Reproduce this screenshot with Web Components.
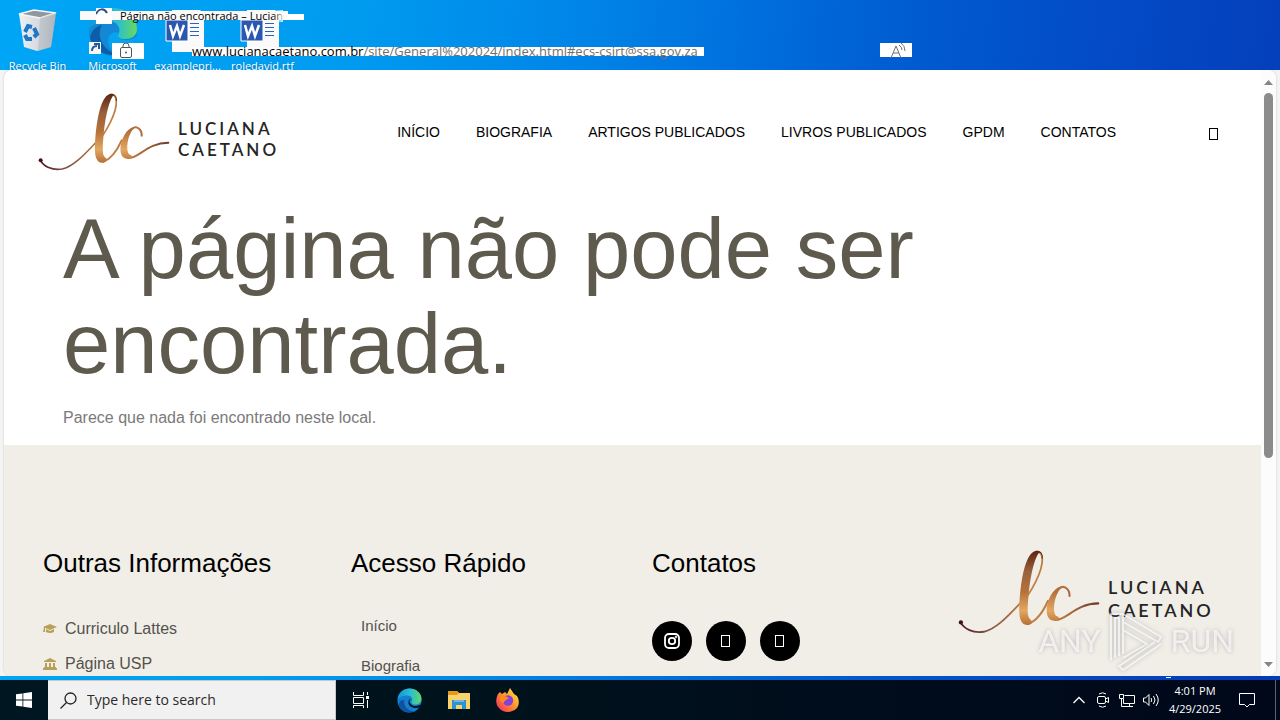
<!DOCTYPE html>
<html lang="pt-BR">
<head>
<meta charset="utf-8">
<title>Página não encontrada – Luciana Caetano</title>
<style>
  html, body { height: 100%; }
  body {
    margin: 0; overflow: hidden;
    font-family: "Liberation Sans", Arial, sans-serif;
    --ui: "Open Sans", "Noto Sans", sans-serif;
    background: linear-gradient(97deg, #00a6f5 0%, #009cf0 25%, #0086e8 42%, #006fdd 55%, #0058cf 69%, #0448c4 84%, #043ab6 100%);
  }
</style>
</head>
<body>
<win-screen></win-screen>

<script>
const define = (name, html) => customElements.define(name, class extends HTMLElement {
  constructor() {
    super();
    const t = document.createElement('template');
    t.innerHTML = html;
    this.attachShadow({ mode: 'open' }).append(t.content.cloneNode(true));
  }
});

/* Desktop icons */
define('desktop-icon', `
<style>
  :host { display: flex; flex-direction: column; align-items: center; width: 75px; flex: none; padding-top: 8px; box-sizing: border-box; }
  .art { height: 51px; display: flex; }
  .label { font: 11px/14px var(--ui); color: #fff; white-space: nowrap; text-shadow: 0 1px 2px #0469a8; }
</style>
<div class="art"><slot name="art"></slot></div>
<div class="label"><slot></slot></div>`);

define('word-art', `
<style>:host { display: block; } svg { display: block; }</style>
<svg width="48" height="50" viewBox="0 0 48 50" aria-hidden="true">
  <path d="M8 2h28l4 4v38H8z" fill="#fafafa"/>
  <path d="M26 15.500h9M26 19.500h9M26 23.500h9M26 27.500h9" stroke="#2b62c0"/>
  <path d="M2 12h22v21H2z" fill="#2a58b0" stroke="#fff"/>
  <path d="M6 17l3 11 4-10 3 10 4-11" fill="none" stroke="#fff" stroke-width="2.500"/>
</svg>`);

define('desktop-area', `
<style>
  :host { display: block; position: relative; height: 70px; overflow: hidden; flex: none; }
  .icons { display: flex; }
  svg { display: block; }
  .float { position: absolute; }
  .patch { position: absolute; background: #fff; }
  .tab { left: 120px; top: 8px; font: 11px/16px var(--ui); color: #000; white-space: nowrap; }
  .tab::after { content: ""; position: absolute; right: 0; top: 2px; width: 10px; height: 12px; background: linear-gradient(90deg, transparent, #fffc); }
  .strip { left: 80px; top: 11px; width: 208px; height: 9px; background: #fafafa; }
  .strip-end { left: 284px; top: 14px; width: 20px; height: 6px; }
  .spin { left: 96px; top: 8px; width: 16px; height: 16px; }
  .lock { left: 112px; top: 43px; width: 32px; height: 16px; }
  .bar { left: 192px; top: 47px; width: 512px; height: 9px; }
  .url { left: 192px; top: 43px; font: 13px/16px var(--ui); color: #6f6f6f; white-space: nowrap; }
  .url b { font-weight: 400; color: #000; }
  .read { left: 880px; top: 43px; width: 32px; height: 14px; }
</style>
<div class="icons">
  <desktop-icon>
    <svg slot="art" width="44" height="46" viewBox="0 0 44 46" aria-hidden="true">
      <defs><linearGradient id="bin" x2="1"><stop stop-color="#eef1f4"/><stop offset=".6" stop-color="#d2d7dc"/><stop offset="1" stop-color="#a3abb4"/></linearGradient></defs>
      <path d="M3 6l15-4 22 3-5 34-14 4-13-4z" fill="url(#bin)"/>
      <path d="M3 6l15-4 22 3-16 5z" fill="#8f979f" stroke="#f5f7f8" stroke-width="1.500"/>
      <path d="M24 10l-2 33 13-4 5-34z" fill="#b4bac2" opacity=".6"/>
      <g fill="none" stroke="#1f77c9" stroke-width="4"><path d="M9 24l3-6 4 1"/><path d="M18 20l3 6-3 3"/><path d="M16 31h-5l-2-4"/></g>
    </svg>Recycle Bin
  </desktop-icon>
  <desktop-icon>
    <svg slot="art" width="50" height="48" viewBox="0 0 50 48" aria-hidden="true">
      <defs><linearGradient id="eg" x2="1"><stop stop-color="#1497dd"/><stop offset=".6" stop-color="#2bc0d0"/><stop offset="1" stop-color="#68d95a"/></linearGradient></defs>
      <circle cx="25" cy="24" r="24" fill="#1389d6"/>
      <path d="M1 22C3 7 14 0 25 0c14 0 24 10 24 21 0 7-6 10-12 10-5 0-9-2-6-6 2-5-2-12-10-12C11 13 3 17 1 22z" fill="url(#eg)"/>
      <path d="M14 17C8 27 14 44 31 46 22 50 5 43 2 30c1-7 6-12 12-13z" fill="#0d5da8"/>
      <path d="M31 25c-3 4 1 7 7 7 6 0 9-2 11-4-3 10-12 17-18 17-7-1-12-7-11-14 1-4 6-9 11-6z" fill="#06a3f0"/>
      <path d="M1 34h12v12H1z" fill="#f4f6f8"/><path d="M4 43c0-4 2-5 5-5M6 36h5v5" fill="none" stroke="#205a9b" stroke-width="2"/>
    </svg>Microsoft
  </desktop-icon>
  <desktop-icon><word-art slot="art"></word-art>examplepri...</desktop-icon>
  <desktop-icon><word-art slot="art"></word-art>roledavid.rtf</desktop-icon>
</div>
<div class="patch strip"></div>
<div class="patch strip-end"></div>
<div class="patch spin"><svg width="16" height="16" aria-hidden="true"><path d="M0 6c3-6 8-6 11-1" fill="none" stroke="#24508c" stroke-width="2"/></svg></div>
<div class="float tab">Página não encontrada – Lucian</div>
<div class="patch lock"><svg width="32" height="16" aria-hidden="true"><g fill="none" stroke="#555"><rect x="8.500" y="4.500" width="11" height="10" rx="1.500"/><path d="M11 4V3a3 3 0 0 1 6 0v1"/></g><circle cx="14" cy="9.500" r="1" fill="#555"/></svg></div>
<div class="patch bar"></div>
<div class="float url"><b>www.lucianacaetano.com.br</b>/site/General%202024/index.html#ecs-csirt@ssa.gov.za</div>
<div class="patch read"><svg width="32" height="16" overflow="visible" aria-hidden="true"><path d="M11 15L16 3l5 12M13 10h6M19 2q3 2 3 5M21 0q4 3 4 8" fill="none" stroke="#6c7078"/></svg></div>`);

/* Brand */
define('brand-logo', `
<style>
  :host { display: flex; align-items: center; flex: none; }
  svg { display: block; width: var(--mark, 132px); height: auto; }
  .name { color: #262424; font: 600 var(--name, 17px)/var(--name-line, 21px) Lato, sans-serif; letter-spacing: 3px; padding-top: 14px; }
  .name span { display: block; }
  a { display: flex; align-items: center; gap: 8px; text-decoration: none; }
</style>
<a href="#">
<svg viewBox="54 38 396 237" role="img" aria-label="LC">
  <defs>
    <linearGradient id="g" gradientUnits="userSpaceOnUse" x1="0" y1="40" x2="0" y2="272"><stop stop-color="#5d2413"/><stop offset=".25" stop-color="#99613b"/><stop offset=".5" stop-color="#b5733b"/><stop offset=".72" stop-color="#e3a760"/><stop offset=".88" stop-color="#b87438"/><stop offset="1" stop-color="#74432c"/></linearGradient>
    <linearGradient id="h" gradientUnits="userSpaceOnUse" x1="55" y1="0" x2="447" y2="0"><stop stop-color="#4b1019"/><stop offset=".2" stop-color="#805044"/><stop offset=".5" stop-color="#c28246"/><stop offset=".75" stop-color="#b87440"/><stop offset="1" stop-color="#6d3928"/></linearGradient>
  </defs>
  <g fill="none" stroke="url(#h)" stroke-linecap="round">
    <path d="M61 240C71 258 96 271 126 266C162 259 202 213 228 186" stroke-width="5"/>
    <path d="M228 190C258 158 291 96 289 62C288 48 281 42 272 43" stroke-width="5"/>
    <path d="M250 244C273 236 291 211 305 180" stroke-width="6"/>
    <path d="M324 233C356 236 381 187 445 187" stroke-width="6"/>
    <path d="M337 145C350 134 366 148 365 166" stroke-width="6"/>
  </g>
  <circle cx="62" cy="240" r="6" fill="#45101a"/>
  <g fill="url(#g)">
    <path d="M291 62C291 42 280 38 269 41C239 51 228 133 225 193C223 226 229 250 250 247C262 245 263 237 255 231C246 223 248 198 250 172C254 122 264 70 278 48C283 42 289 48 287 62z"/>
    <path d="M352 140C332 133 307 161 302 196C298 223 310 239 328 234C340 231 336 225 330 223C318 218 320 181 331 160C337 148 344 139 352 140z"/>
  </g>
</svg>
<div class="name"><span>LUCIANA</span><span>CAETANO</span></div>
</a>`);

define('tofu-glyph', `
<style>:host { display: block; } svg { display: block; }</style>
<svg width="10" height="12" aria-hidden="true"><rect x=".5" y=".5" width="8" height="11" fill="none" stroke="currentColor"/></svg>`);

define('site-header', `
<style>
  :host { display: flex; align-items: center; height: 124px; padding: 0 42px 0 34px; }
  nav { display: flex; gap: 36px; margin: 0 93px 0 auto; }
  a { font-size: 14px; line-height: 20px; color: #000; text-decoration: none; white-space: nowrap; }
  button { border: 0; padding: 0; background: none; color: #000; margin-top: 4px; }
</style>
<brand-logo></brand-logo>
<nav>
  <a href="#">INÍCIO</a><a href="#">BIOGRAFIA</a><a href="#">ARTIGOS PUBLICADOS</a><a href="#">LIVROS PUBLICADOS</a><a href="#">GPDM</a><a href="#">CONTATOS</a>
</nav>
<button aria-label="Pesquisar"><tofu-glyph></tofu-glyph></button>`);

define('not-found', `
<style>
  :host { display: block; padding: 7px 59px 15px; }
  h1 { margin: 0 0 15px; font-size: 85px; line-height: 95px; font-weight: 400; color: #5e5a4e; }
  p { margin: 0; font-size: 16px; line-height: 24px; color: #7a7a7a; }
</style>
<h1>A página não pode ser encontrada.</h1>
<p>Parece que nada foi encontrado neste local.</p>`);

define('site-footer', `
<style>
  :host { display: grid; grid-template-columns: 308fr 301fr 306fr 264fr; padding: 101px 39px 0; background: #f1eee8; min-height: 300px; align-items: start; box-sizing: border-box; }
  h2 { margin: 0 0 26px; font-size: 26px; line-height: 34px; font-weight: 400; color: #000; }
  ul { list-style: none; margin: 0; padding: 0; }
  a { text-decoration: none; color: #54524d; }
  .info { padding-top: 5px; }
  .info a { display: flex; align-items: center; gap: 8px; font-size: 16px; line-height: 35px; }
  .menu a { display: block; padding-left: 10px; font-size: 15px; line-height: 40px; }
  .social { display: flex; gap: 14px; padding-top: 15px; }
  .social a { width: 40px; height: 40px; border-radius: 50%; background: #000; color: #fff; display: grid; place-items: center; }
  svg { display: block; }
  brand-logo { --mark: 142px; --name: 18px; --name-line: 23px; padding-top: 4px; }
</style>
<section>
  <h2>Outras Informações</h2>
  <ul class="info">
    <li><a href="#"><svg width="14" height="12" viewBox="0 0 14 12" fill="#b8a05a" aria-hidden="true"><path d="M7 1l7 3-7 3-7-3zM3 6l4 2 4-2v3q-4 2-8 0zM1 4.500h1V9H0z"/></svg>Curriculo Lattes</a></li>
    <li><a href="#"><svg width="14" height="12" viewBox="0 0 14 12" fill="#b8a05a" aria-hidden="true"><path d="M7 0l6 3v1H1V3zM2 5h2v4H2zM6 5h2v4H6zM10 5h2v4h-2zM1 9h12v1h1v2H0v-2h1z"/></svg>Página USP</a></li>
  </ul>
</section>
<section>
  <h2>Acesso Rápido</h2>
  <ul class="menu"><li><a href="#">Início</a></li><li><a href="#">Biografia</a></li></ul>
</section>
<section>
  <h2>Contatos</h2>
  <div class="social">
    <a href="#" aria-label="Instagram"><svg width="16" height="16" fill="none" stroke="#fff" stroke-width="1.800" aria-hidden="true"><rect x="1" y="1" width="14" height="14" rx="4"/><circle cx="8" cy="8" r="3.200"/><circle cx="12" cy="4" r=".4"/></svg></a>
    <a href="#" aria-label="Facebook"><tofu-glyph></tofu-glyph></a>
    <a href="#" aria-label="E-mail"><tofu-glyph></tofu-glyph></a>
  </div>
</section>
<brand-logo></brand-logo>`);

define('scroll-rail', `
<style>
  :host { display: flex; flex-direction: column; align-items: center; width: 15px; flex: none; background: #fcfcfc; padding: 10px 0 9px; box-sizing: border-box; gap: 8px; }
  .track { flex: 1; width: 9px; }
  .thumb { height: 65%; background: #8b8b8b; border-radius: 5px; }
  svg { display: block; }
</style>
<svg width="9" height="5" aria-hidden="true"><path d="M0 5l4.500-5L9 5z" fill="#858585"/></svg>
<div class="track"><div class="thumb"></div></div>
<svg width="9" height="5" aria-hidden="true"><path d="M0 0h9L4.500 5z" fill="#858585"/></svg>`);

define('any-run', `
<style>
  :host { position: absolute; right: 46px; bottom: 4px; display: flex; align-items: center; gap: 8px; color: #fffa; font: 400 32px/58px Roboto, sans-serif; filter: drop-shadow(0 0 2px #777a); }
  svg { display: block; }
</style>
<span>ANY</span>
<svg width="54" height="62" viewBox="0 0 54 62" fill="none" stroke="#fffa" stroke-width="2" stroke-linejoin="round" aria-hidden="true"><path d="M2 50V4h12v40M6 48V8h4v38M14 4l38 23-3 5-35-20M14 20l24 14-24 14M52 34L14 60l-4-4 36-24"/></svg>
<span>RUN</span>`);

define('browser-window', `
<style>
  :host { display: flex; flex: 1; min-height: 0; overflow: hidden; position: relative; background: #f4f4f5; padding: 0 4px; }
  .view { display: flex; flex: 1; min-width: 0; overflow: hidden; border-radius: 8px; box-shadow: 0 0 2px #bbb; background: #fff; }
  .page { display: flex; flex-direction: column; flex: 1; min-width: 0; overflow: hidden; }
  .page > * { flex-shrink: 0; }
</style>
<div class="view">
  <div class="page"><site-header></site-header><main><not-found></not-found></main><site-footer></site-footer></div>
  <scroll-rail></scroll-rail>
</div>
<any-run></any-run>`);

define('task-bar', `
<style>
  :host { display: flex; height: 40px; margin-top: 4px; flex: none; position: relative; background: linear-gradient(90deg, #001620, #00121c 40%, #000d1c 65%, #000819); color: #fff; font-family: var(--ui); }
  :host::before { content: ""; position: absolute; right: 109px; top: -3px; width: 5px; height: 1px; background: #fff; }
  button { border: 0; padding: 0; margin: 0; background: none; color: #fff; display: grid; place-items: center; font: inherit; }
  svg { display: block; }
  .start { width: 48px; }
  label { display: flex; align-items: center; gap: 10px; width: 288px; padding-left: 12px; box-sizing: border-box; background: #f1f1f1; border: 1px solid #c9c9c9; border-width: 1px 1px 1px 0; }
  input { flex: 1; min-width: 0; border: 0; padding: 0; background: none; outline: 0; font: 14px/20px var(--ui); color: #222; }
  input::placeholder { color: #2b2b2b; opacity: 1; }
  .app { width: 49px; }
  .tray { display: flex; margin-left: auto; }
  .tray button { width: 24px; }
  .tray .clock { width: 64px; font-size: 11px; line-height: 18px; align-content: center; white-space: nowrap; }
  .tray .note { width: 40px; }
  .peek { width: 4px; margin-left: 8px; border-left: 1px solid #5c6570; }
</style>
<button class="start" aria-label="Start"><svg width="16" height="16" fill="#fff"><path d="M0 2.300l6.500-.9v6.200H0zM7.300 1.300L16 0v7.600H7.300zM0 8.400h6.500v6.200L0 13.700zM7.300 8.400H16V16l-8.700-1.200z"/></svg></button>
<label aria-label="Search"><svg width="17" height="17" fill="none" stroke="#222" stroke-width="1.300"><circle cx="10.500" cy="6.500" r="5.500"/><path d="M6.500 10.500L.5 16.500"/></svg><input type="text" placeholder="Type here to search"></label>
<button class="app" aria-label="Task view"><svg width="18" height="16" fill="none" stroke="#fff"><path d="M1.500 0v3.500h10V0M1.500 16v-2.500h10V16M1.500 5.500h10v6h-10zM15.500 0v3M15.500 8v8"/><path d="M14 4h3v3h-3z" fill="#fff" stroke="none"/></svg></button>
<button class="app" aria-label="Edge"><svg width="25" height="25" viewBox="0 0 50 50">
  <defs><linearGradient id="e" x2="1"><stop stop-color="#1596dc"/><stop offset=".55" stop-color="#2bbfcf"/><stop offset="1" stop-color="#5fd863"/></linearGradient></defs>
  <circle cx="25" cy="25" r="24" fill="#147fd1"/><path d="M1 23C3 8 14 1 25 1c14 0 24 10 24 20 0 8-6 12-13 12-5 0-9-3-6-7 2-5-2-11-9-11C12 15 4 18 1 23z" fill="url(#e)"/><path d="M15 24c-3 12 7 22 19 22-8 5-20 3-26-3-8-9-4-20 7-19z" fill="#0c54a0"/><path d="M28 22c-7 4-1 13 8 14 5 0 9-2 12-3l1 4-7 3c-11 1-20-4-19-12 0-4 2-6 5-6z" fill="#001620"/></svg></button>
<button class="app" aria-label="File Explorer"><svg width="22" height="20"><path d="M0 1h9l2 2h11v16H0z" fill="#f8d36b"/><path d="M0 1h9l2 2-2 2H0z" fill="#e4981d"/><path d="M4 10h14v9h-4v-4H8v4H4z" fill="#2c91d5"/><path d="M6 10h10v2H6z" fill="#6db6e4"/></svg></button>
<button class="app" aria-label="Firefox"><svg width="24" height="24">
  <defs><linearGradient id="f" x1="1" x2="0" y2="1"><stop stop-color="#fff44f"/><stop offset=".45" stop-color="#ff9a24"/><stop offset="1" stop-color="#f5206b"/></linearGradient></defs>
  <path d="M2 6l2-2 2 2 3-2 2 2 3-6 4 6 3 2c3 5 2 10-1 13-5 4-13 4-17-1-4-4-3-10-1-14z" fill="url(#f)"/><circle cx="12" cy="12.500" r="5.200" fill="#8442dc"/><path d="M4 10c4-4 7-1 9 0-2 2-5 2-5 5-3-1-5-3-4-5z" fill="#ff8a1e"/></svg></button>
<div class="tray">
  <button aria-label="Hidden icons"><svg width="12" height="8" fill="none" stroke="#fff" stroke-width="1.300"><path d="M.5 7L6 1.500 11.500 7"/></svg></button>
  <button aria-label="Meet Now"><svg width="14" height="16" fill="none" stroke="#fff"><rect x="1.500" y="4.500" width="8" height="7" rx="1.500"/><path d="M9.500 7l3-1.500v5l-3-1.500M3 2q3.500-2.500 7 0M3 14q3.500 2.500 7 0"/></svg></button>
  <button aria-label="Network"><svg width="17" height="15" fill="none" stroke="#fff"><path d="M5.500 2.500h10v8h-11V6M10.500 10.500v3M6 13.500h8M.5 1.500h4v4h-4zM2.500 5.500v8H6"/></svg></button>
  <button aria-label="Volume"><svg width="17" height="14" fill="none" stroke="#fff"><path d="M.5 5h2L6 1.500v11L2.500 9h-2zM8 5q1.500 2 0 4M10.500 3q3 4 0 8M13 1q4.500 6 0 12"/></svg></button>
  <button class="clock"><span>4:01 PM</span><span>4/29/2025</span></button>
  <button class="note" aria-label="Notifications"><svg width="17" height="16" fill="none" stroke="#fff"><path d="M.5 1.500h15v11h-5L8 15l-2.500-2.500h-5z"/></svg></button>
  <div class="peek"></div>
</div>`);

define('win-screen', `
<style>:host { display: flex; flex-direction: column; height: 100vh; }</style>
<desktop-area></desktop-area>
<browser-window></browser-window>
<task-bar></task-bar>`);
</script>
</body>
</html>
